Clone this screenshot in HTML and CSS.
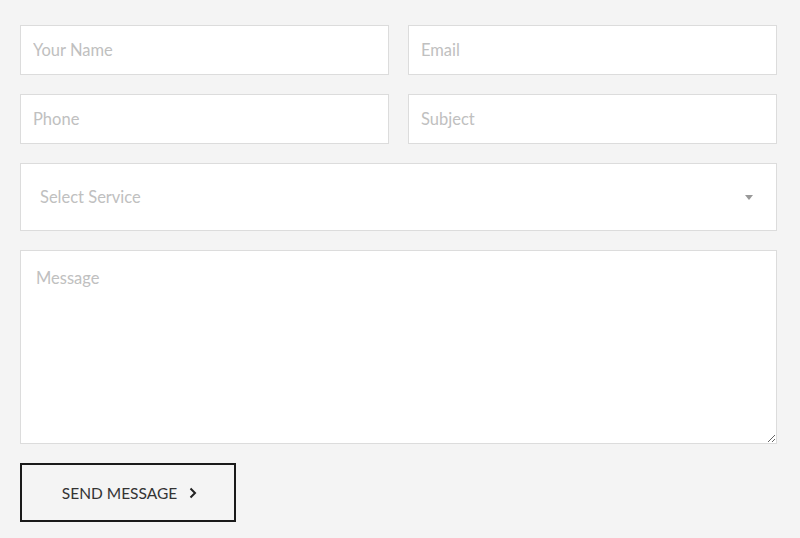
FILE: index.html
```html
<!DOCTYPE html>
<html lang="en">
<head>
  <meta charset="UTF-8" />
  <title>Contact</title>
  <link rel="stylesheet" href="styles.css">
</head>
<body>
  <form class="contact-form">
    <div class="row">
      <input type="text" placeholder="Your Name" />
      <input type="email" placeholder="Email" />
    </div>
    <div class="row">
      <input type="text" placeholder="Phone" />
      <input type="text" placeholder="Subject" />
    </div>
    <div class="select-wrap">
      <select>
        <option value="">Select Service</option>
      </select>
      <span class="caret"></span>
    </div>
    <textarea placeholder="Message"></textarea>
    <button type="submit" class="send">SEND MESSAGE
      <svg width="10" height="12" viewBox="0 0 10 12"><path d="M2.5 1.5 L7 6 L2.5 10.5" fill="none" stroke="#222" stroke-width="2"/></svg>
    </button>
  </form>
</body>
</html>
```

FILE: styles.css
```css
body {
  margin: 0;
  padding: 25px 23px 0 20px;
  background: #f4f4f4;
  font-family: Lato, 'Open Sans', sans-serif;
  color: #333;
}

.contact-form {
  display: flex;
  flex-direction: column;
  gap: 19px;
}

.row {
  display: grid;
  grid-template-columns: 1fr 1fr;
  gap: 19px;
}

input, select, textarea {
  box-sizing: border-box;
  width: 100%;
  border: 1px solid #dcdcdc;
  background: #fff;
  font-family: inherit;
  font-size: 16.5px;
  color: #555;
  outline: none;
  margin: 0;
}

input {
  height: 50px;
  padding: 0 12px;
}

::placeholder { color: #c0c0c0; }

.select-wrap { position: relative; }

select {
  height: 68px;
  padding: 0 19px;
  appearance: none;
  border-radius: 0;
  color: #c0c0c0;
}

.caret {
  position: absolute;
  right: 24px;
  top: 32px;
  border-left: 4px solid transparent;
  border-right: 4px solid transparent;
  border-top: 5px solid #999;
}

textarea {
  height: 194px;
  padding: 17px 15px;
  resize: vertical;
  display: block;
}

.send {
  align-self: flex-start;
  width: 216px;
  height: 59px;
  border: 2px solid #1a1a1a;
  background: transparent;
  font-family: inherit;
  font-size: 15.5px;
  color: #333;
  display: flex;
  align-items: center;
  justify-content: center;
  gap: 11px;
  padding: 0 0 0 4px;
  cursor: pointer;
}
```
